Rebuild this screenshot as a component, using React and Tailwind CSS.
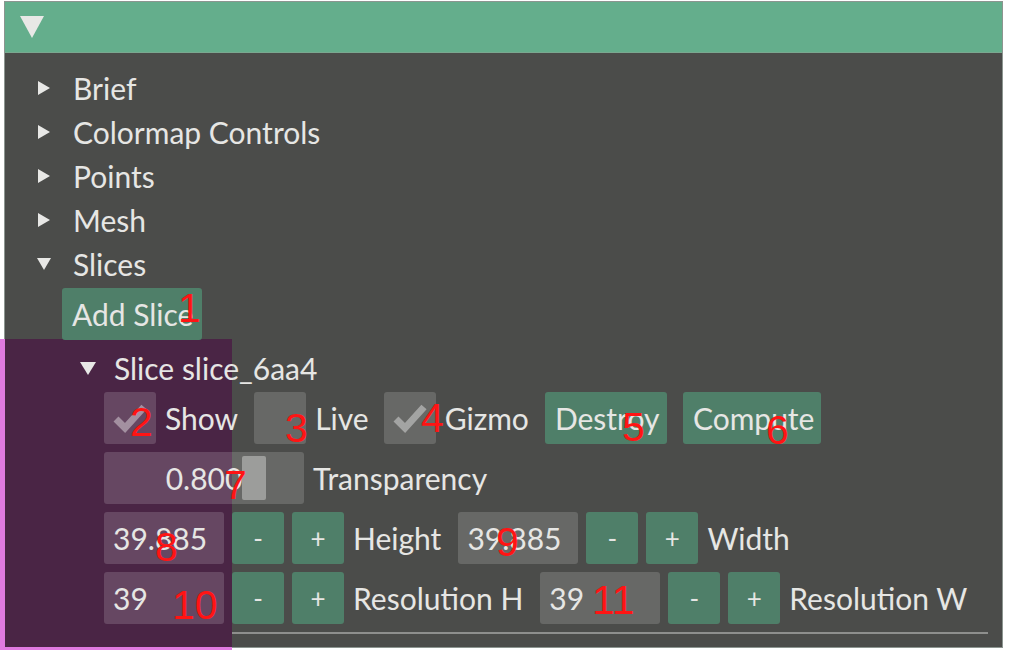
import React from "react";

const T = ({ children, className = "" }) => <span className={`relative z-[2] ${className}`}>{children}</span>;

const RightArrow = () => (
  <svg width="12" height="14" viewBox="0 0 12 14" className="shrink-0 relative z-[2]">
    <polygon points="0,0 12,7 0,14" fill="#e8e8e6" />
  </svg>
);
const DownArrow = ({ w = 14, h = 12 }) => (
  <svg width={w} height={h} viewBox={`0 0 ${w} ${h}`} className="shrink-0 relative z-[2]">
    <polygon points={`0,0 ${w},0 ${w / 2},${h}`} fill="#e8e8e6" />
  </svg>
);

const Check = () => (
  <svg width="52" height="52" viewBox="0 0 52 52">
    <polyline points="12,27 21,36 40,15" fill="none" stroke="#ffffff" strokeOpacity="0.4" strokeWidth="7" strokeLinecap="butt" strokeLinejoin="miter" />
  </svg>
);

const CheckBox = ({ checked, label }) => (
  <div className="flex items-center">
    <div className="relative z-[2] w-[52px] h-[52px] bg-white/[0.155] rounded-[3px]">{checked && <Check />}</div>
    <T className="ml-[9px]">{label}</T>
  </div>
);

const Btn = ({ w, children }) => (
  <div className="relative z-[2] h-[52px] bg-[#4f7f69] rounded-[3px] flex items-center pl-[10px]" style={{ width: w }}>
    {children}
  </div>
);

const Input = ({ value }) => (
  <div className="relative z-[2] w-[120px] h-[52px] bg-white/[0.155] rounded-[3px] flex items-center pl-[9px]">
    {value}
  </div>
);

const Stepper = ({ value, label }) => (
  <div className="flex items-center">
    <Input value={value} />
    <div className="relative z-[2] ml-[8px] w-[52px] h-[52px] bg-[#4f7f69] rounded-[3px] flex items-center justify-center text-[26px]">-</div>
    <div className="relative z-[2] ml-[8px] w-[52px] h-[52px] bg-[#4f7f69] rounded-[3px] flex items-center justify-center text-[26px]">+</div>
    <T className="ml-[9px]">{label}</T>
  </div>
);

const Num = ({ n, x, y }) => (
  <div
    className="absolute z-[3] text-[41px] leading-none text-[#ff1414] font-['Liberation_Sans',sans-serif]"
    style={{ left: x, top: y }}
  >
    {n}
  </div>
);

export default function App() {
  return (
    <div className="relative w-[1010px] h-[650px] bg-white overflow-hidden font-['Lato',sans-serif] text-[30px] text-[#e6e6e4] leading-none">
      <div className="ml-[4px] mt-[1px] w-[999px] h-[647px] bg-[#4b4c4a] border border-[#8c9590] flex flex-col">
        <div className="h-[51px] bg-[#64ae8c] border-b border-[#7aa890] flex items-center pl-[15px]">
          <DownArrow w={24} h={22} />
        </div>
        <div className="flex flex-col pt-[13px]">
          {["Brief", "Colormap Controls", "Points", "Mesh"].map((t) => (
            <div key={t} className="flex items-center h-[44px] pl-[33px]">
              <RightArrow />
              <T className="ml-[23px]">{t}</T>
            </div>
          ))}
          <div className="flex items-center h-[44px] pl-[32px]">
            <DownArrow />
            <T className="ml-[22px]">Slices</T>
          </div>
          <div className="ml-[57px] mt-[2px]">
            <Btn w={140}>Add Slice</Btn>
          </div>
          <div className="flex items-center h-[44px] mt-[6px] pl-[75px]">
            <DownArrow w={16} h={13} />
            <T className="ml-[18px]">Slice slice_6aa4</T>
          </div>
          <div className="ml-[99px] mt-[2px] flex flex-col gap-[8px]">
            <div className="flex items-center">
              <CheckBox checked label="Show" />
              <div className="ml-[16px]"><CheckBox label="Live" /></div>
              <div className="ml-[15px]"><CheckBox checked label="Gizmo" /></div>
              <div className="ml-[16px]"><Btn w={122}>Destroy</Btn></div>
              <div className="ml-[16px]"><Btn w={138}>Compute</Btn></div>
            </div>
            <div className="flex items-center">
              <div className="relative z-[2] w-[200px] h-[52px] bg-white/[0.155] rounded-[3px] flex items-center justify-center">
                <div className="absolute left-[138px] top-[4px] w-[24px] h-[44px] bg-[#9c9d9b] rounded-[2px]" />
                <span className="relative">0.800</span>
              </div>
              <T className="ml-[9px]">Transparency</T>
            </div>
            <div className="flex items-center">
              <Stepper value="39.885" label="Height" />
              <div className="ml-[17px]"><Stepper value="39.885" label="Width" /></div>
            </div>
            <div className="flex items-center">
              <Stepper value="39" label="Resolution H" />
              <div className="ml-[17px]"><Stepper value="39" label="Resolution W" /></div>
            </div>
          </div>
          <div className="ml-[57px] mt-[8px] w-[926px] h-[2px] bg-[#8e8f8d]" />
        </div>
      </div>

      <div className="absolute z-[1] left-0 top-[339px] w-[232px] h-[311px] bg-[#e07ae0]">
        <div className="ml-[5px] w-[227px] h-[308px] bg-[#4a2545]" />
      </div>

      <Num n="1" x={178} y={288} />
      <Num n="2" x={130} y={402} />
      <Num n="3" x={285} y={408} />
      <Num n="4" x={421} y={398} />
      <Num n="5" x={622} y={407} />
      <Num n="6" x={766} y={410} />
      <Num n="7" x={224} y={465} />
      <Num n="8" x={155} y={527} />
      <Num n="9" x={496} y={522} />
      <Num n="10" x={172} y={585} />
      <Num n="11" x={592} y={580} />
    </div>
  );
}
